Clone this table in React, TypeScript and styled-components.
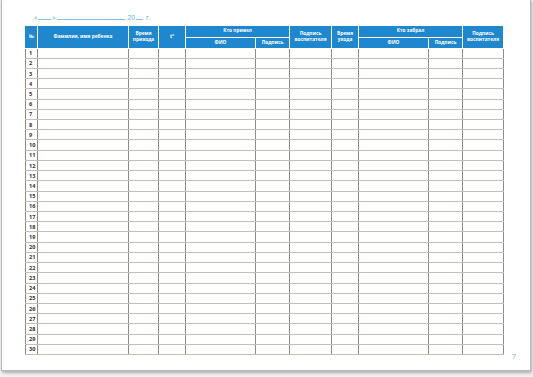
import React from 'react'
import styled, { createGlobalStyle } from 'styled-components'

const Global = createGlobalStyle`
  html, body {
    margin: 0;
    padding: 0;
    background: #f2f2f2;
    width: 533px;
    height: 377px;
    overflow: hidden;
  }
`

const Sheet = styled.div`
  box-sizing: border-box;
  position: relative;
  margin: -1px 0 0 1px;
  width: 530px;
  height: 372px;
  background: #fff;
  border: 1px solid #b9b9b9;
  box-shadow: 1px 2px 3px rgba(0, 0, 0, 0.28);
  padding: 12px 0 0 23px;
  font-family: 'Open Sans', 'Liberation Sans', sans-serif;
`

const DateLine = styled.div`
  display: flex;
  align-items: flex-end;
  height: 9px;
  margin-left: 9px;
  font-size: 6.6px;
  color: #6ea9dc;
  gap: 1px;
  line-height: 7px;
`

const Blank = styled.span<{ $w: number }>`
  display: inline-block;
  width: ${(p) => p.$w}px;
  border-bottom: 0.6px solid #8dbde6;
  margin-bottom: 1px;
`

const Gap = styled.span<{ $w: number }>`
  margin-left: ${(p) => p.$w}px;
`

const Table = styled.table`
  margin-top: 5px;
  border-collapse: collapse;
  table-layout: fixed;
  width: 478px;
  font-family: 'Open Sans', 'Liberation Sans', sans-serif;
`

const Head = styled.th`
  background: #1f87cd;
  color: #fff;
  font-size: 4.8px;
  font-weight: 700;
  line-height: 5.6px;
  padding: 0;
  border: 1px solid #fff;
  border-top: none;
  text-align: center;
  vertical-align: middle;
  &:first-child {
    border-left: 1px solid #1f87cd;
  }
`

const HeadRow = styled.tr`
  height: 11px;
`

const Row = styled.tr`
  height: 10.23px;
`

const Cell = styled.td`
  padding: 0;
  border-top: 1px solid #c4c0b9;
  border-bottom: 1px solid #c4c0b9;
  border-left: 1px solid #8f8a82;
  border-right: 1px solid #8f8a82;
`

const NumCell = styled(Cell)`
  font-size: 5.6px;
  font-weight: 700;
  color: #333;
  padding-left: 3px;
  line-height: 6px;
`

const PageNumber = styled.div`
  position: absolute;
  right: 14px;
  bottom: 9px;
  font-size: 7px;
  color: #6ea9dc;
  font-family: 'Open Sans', 'Liberation Sans', sans-serif;
`

const widths = [12, 91, 30, 27, 70, 34, 42, 27, 70, 34, 41]

export default function App() {
  const rows = Array.from({ length: 30 }, (_, i) => i + 1)
  return (
    <>
      <Global />
      <Sheet>
        <DateLine>
          <span>«</span>
          <Blank $w={13} />
          <span>»</span>
          <Blank $w={68} />
          <Gap $w={2}>20</Gap>
          <Blank $w={7} />
          <Gap $w={2}>г.</Gap>
        </DateLine>
        <Table>
          <colgroup>
            {widths.map((w, i) => (
              <col key={i} style={{ width: w }} />
            ))}
          </colgroup>
          <thead>
            <HeadRow>
              <Head rowSpan={2}>№</Head>
              <Head rowSpan={2}>Фамилия, имя ребенка</Head>
              <Head rowSpan={2}>
                Время
                <br />
                прихода
              </Head>
              <Head rowSpan={2}>t°</Head>
              <Head colSpan={2}>Кто привел</Head>
              <Head rowSpan={2}>
                Подпись
                <br />
                воспитателя
              </Head>
              <Head rowSpan={2}>
                Время
                <br />
                ухода
              </Head>
              <Head colSpan={2}>Кто забрал</Head>
              <Head rowSpan={2}>
                Подпись
                <br />
                воспитателя
              </Head>
            </HeadRow>
            <HeadRow>
              <Head>ФИО</Head>
              <Head>Подпись</Head>
              <Head>ФИО</Head>
              <Head>Подпись</Head>
            </HeadRow>
          </thead>
          <tbody>
            {rows.map((n) => (
              <Row key={n}>
                <NumCell>{n}</NumCell>
                {widths.slice(1).map((_, i) => (
                  <Cell key={i} />
                ))}
              </Row>
            ))}
          </tbody>
        </Table>
        <PageNumber>7</PageNumber>
      </Sheet>
    </>
  )
}
